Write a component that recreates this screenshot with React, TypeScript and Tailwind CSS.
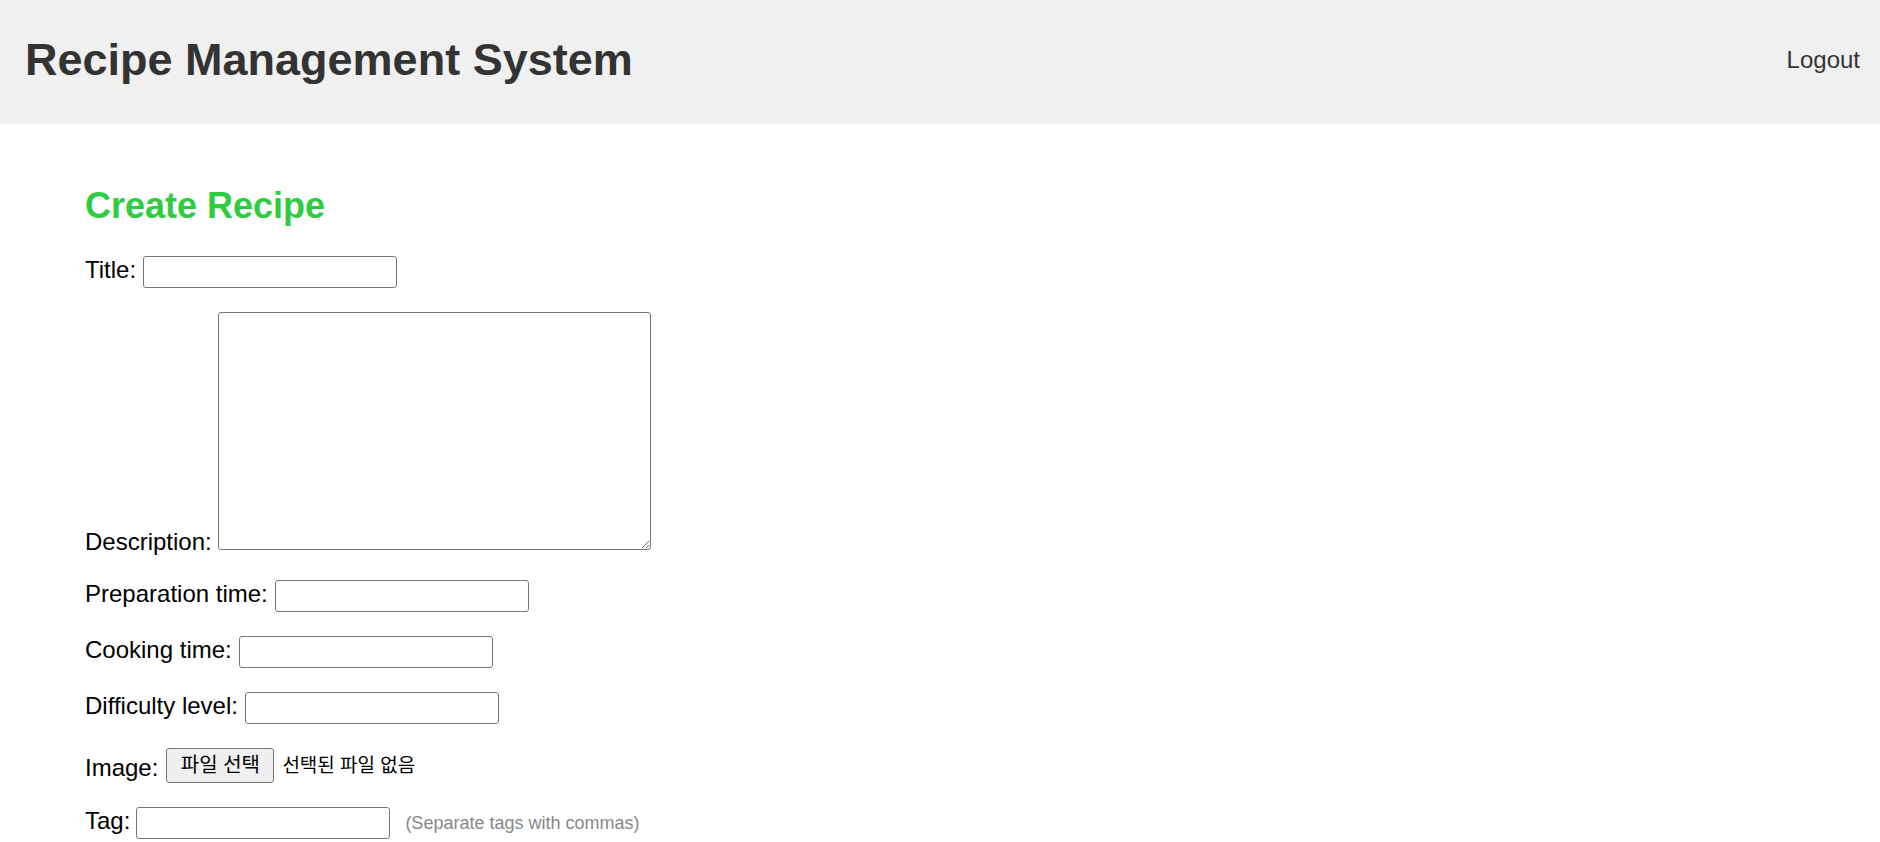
// App.tsx
// Recipe create form. Header bar with app title + logout, then a plain labelled form.

import { useState } from 'react';

const FONT = "font-['Liberation_Sans','Noto_Sans_CJK_KR',Arial,sans-serif]";

const INPUT = 'h-[32px] w-[254px] rounded-[3px] border border-[#767676] bg-white px-[3px] text-[20px] outline-none';

function Row({ label, value, onChange }: { label: string; value: string; onChange: (v: string) => void }) {
  return (
    <div className="mb-[24px] flex h-[32px] items-center">
      <label className="pb-[4px]">{label}:</label>
      <input value={value} onChange={(e) => onChange(e.target.value)} className={`ml-[7px] ${INPUT}`} />
    </div>
  );
}

export default function App() {
  const [form, setForm] = useState({ title: '', description: '', prep: '', cook: '', difficulty: '', tags: '' });

  function set(key: keyof typeof form) {
    return (v: string) => setForm({ ...form, [key]: v });
  }

  return (
    <div className={`min-h-screen bg-white ${FONT}`}>
      <header className="flex h-[124px] items-center justify-between bg-[#f0f0f0] pb-[5px] pl-[25px] pr-[20px] text-[#333]">
        <h1 className="text-[45px] font-bold">Recipe Management System</h1>
        <button className="text-[24px] text-[#333]">Logout</button>
      </header>

      <main className="pl-[85px] pt-[55px] text-[24px] text-black">
        <h2 className="mb-[23px] text-[36px] font-bold text-[#2ecc40]">Create Recipe</h2>

        <form onSubmit={(e) => e.preventDefault()}>
          <Row label="Title" value={form.title} onChange={set('title')} />

          <div className="mb-[20px]">
            <label>Description:</label>{' '}
            <textarea
              value={form.description}
              onChange={(e) => set('description')(e.target.value)}
              className="h-[238px] w-[433px] rounded-[3px] border border-[#767676] p-[3px] align-baseline text-[20px] outline-none"
            />
          </div>

          <Row label="Preparation time" value={form.prep} onChange={set('prep')} />
          <Row label="Cooking time" value={form.cook} onChange={set('cook')} />
          <Row label="Difficulty level" value={form.difficulty} onChange={set('difficulty')} />

          <div className="mb-[24px] flex h-[35px] items-center">
            <label className="pt-[4px]">Image:</label>
            <button
              type="button"
              className="ml-[8px] h-[35px] w-[108px] rounded-[3px] border border-[#767676] bg-[#efefef] text-[20px] leading-[33px] text-black"
            >
              파일 선택
            </button>
            <span className="ml-[8px] pt-[2px] text-[19px]">선택된 파일 없음</span>
          </div>

          <div className="flex h-[32px] items-center">
            <label className="pb-[4px]">Tag:</label>
            <input value={form.tags} onChange={(e) => set('tags')(e.target.value)} className={`ml-[6px] ${INPUT}`} />
            <span className="ml-[15px] text-[18px] text-[#888]">(Separate tags with commas)</span>
          </div>
        </form>
      </main>
    </div>
  );
}
